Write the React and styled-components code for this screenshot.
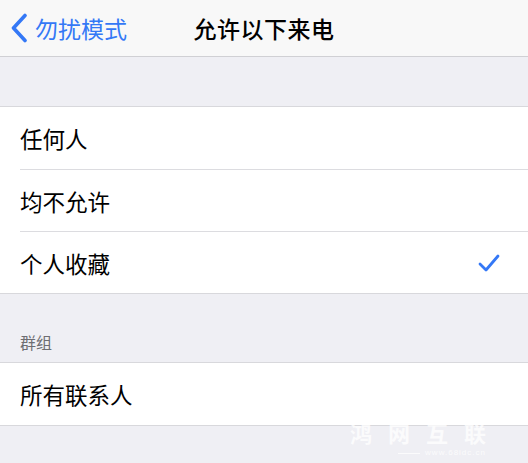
import React from 'react';
import styled, { createGlobalStyle } from 'styled-components';

const GlobalStyle = createGlobalStyle`
	html, body {
		margin: 0;
		padding: 0;
		background: #efeff4;
	}
	body {
		font-family: 'Noto Sans CJK SC', 'Noto Sans', sans-serif;
		-webkit-font-smoothing: antialiased;
	}
`;

const Page = styled.div`
	width: 528px;
	height: 463px;
	background: #efeff4;
	position: relative;
	overflow: hidden;
	display: flex;
	flex-direction: column;
`;

const NavBar = styled.header`
	height: 57px;
	background: #f8f8f8;
	border-bottom: 1px solid #d0d0d4;
	display: grid;
	grid-template-columns: 1fr auto 1fr;
	align-items: center;
	box-sizing: border-box;
`;

const BackButton = styled.div`
	display: flex;
	align-items: center;
	gap: 7px;
	padding-left: 10px;
	color: #3478f6;
	font-size: 23px;
	svg {
		display: block;
	}
`;

const Title = styled.h1`
	margin: 0;
	font-size: 23px;
	font-weight: 500;
	color: #000;
	letter-spacing: 0.5px;
`;

const Spacer = styled.div`
	height: ${(p) => p.h}px;
`;

const SectionHeader = styled.div`
	height: 68px;
	box-sizing: border-box;
	padding: 0 0 8px 20px;
	display: flex;
	align-items: flex-end;
	font-size: 16px;
	color: #6d6d72;
`;

const Group = styled.ul`
	margin: 0;
	padding: 0;
	list-style: none;
	background: #fff;
	border-top: 1px solid #d8d8dc;
	border-bottom: 1px solid #d8d8dc;
`;

const Row = styled.li`
	height: 62px;
	display: flex;
	align-items: center;
	justify-content: space-between;
	margin-left: 20px;
	padding-right: 28px;
	font-size: 22.5px;
	color: #000;
	box-sizing: border-box;
	& + & {
		border-top: 1px solid #dcdce0;
	}
`;

const Watermark = styled.div`
	position: absolute;
	top: 421px;
	right: 26px;
	display: flex;
	flex-direction: column;
	align-items: flex-end;
	gap: 6px;
	color: rgba(255, 255, 255, 0.75);
	pointer-events: none;
`;

const MarkName = styled.span`
	display: block;
	font-size: 22px;
	font-weight: 700;
	letter-spacing: 16px;
	line-height: 22px;
`;

const MarkUrl = styled.span`
	display: flex;
	align-items: center;
	gap: 5px;
	margin-right: 16px;
	font-family: 'Liberation Sans', sans-serif;
	font-size: 8px;
	line-height: 8px;
	letter-spacing: 1px;
	&::before {
		content: '';
		width: 22px;
		height: 1px;
		background: rgba(255, 255, 255, 0.75);
	}
`;

const Chevron = () => (
	<svg width="18" height="30" viewBox="0 0 18 30">
		<path d="M15 2.5 L3.5 15 L15 27.5" fill="none" stroke="#3478f6" strokeWidth="3.6" strokeLinecap="round" strokeLinejoin="round" />
	</svg>
);

const Check = () => (
	<svg width="22" height="20" viewBox="0 0 22 20">
		<path d="M2 11 L8 17 L20 3" fill="none" stroke="#3478f6" strokeWidth="2.8" strokeLinecap="round" strokeLinejoin="round" />
	</svg>
);

const options = [
	{ label: '任何人' },
	{ label: '均不允许' },
	{ label: '个人收藏', checked: true },
];

const App = () => (
	<>
		<GlobalStyle />
		<Page>
			<NavBar>
				<BackButton>
					<Chevron />
					<span>勿扰模式</span>
				</BackButton>
				<Title>允许以下来电</Title>
				<div />
			</NavBar>
			<Spacer h={49} />
			<Group>
				{options.map((o) => (
					<Row key={o.label}>
						<span>{o.label}</span>
						{o.checked && <Check />}
					</Row>
				))}
			</Group>
			<SectionHeader>群组</SectionHeader>
			<Group>
				<Row>所有联系人</Row>
			</Group>
			<Watermark>
				<MarkName>鸿网互联</MarkName>
				<MarkUrl>www.68idc.cn</MarkUrl>
			</Watermark>
		</Page>
	</>
);

export default App;
